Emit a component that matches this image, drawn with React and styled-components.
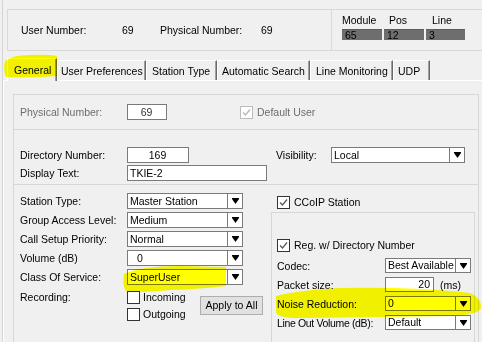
import React from 'react';
import styled, { createGlobalStyle } from 'styled-components';

const Global = createGlobalStyle`
  html, body { margin: 0; padding: 0; background: #f0f0f0; }
  body { font-family: "Liberation Sans", Arial, sans-serif; font-size: 10.5px; color: #000; }
  * { box-sizing: border-box; }
`;

const Screen = styled.div`
  position: relative;
  width: 482px;
  height: 342px;
  overflow: hidden;
  background: #f0f0f0;
  padding-left: 2px;
`;

const Frame = styled.div`
  height: 100%;
  border-left: 1px solid #d5d5d5;
  display: flex;
  flex-direction: column;
`;

const Header = styled.div`
  margin: 9px 0 0 4px;
  height: 42px;
  border: 1px solid #d9d9d9;
  border-right: none;
  display: flex;
  flex-shrink: 0;
`;

const HeaderLeft = styled.div`
  width: 324px;
  border-right: 1px solid #d9d9d9;
  display: flex;
  align-items: center;
  padding-left: 13px;
  line-height: 14px;
`;

const HeaderField = styled.span`
  width: ${p => p.$w}px;
  white-space: nowrap;
`;

const HeaderRight = styled.div`
  padding: 4px 0 0 10px;
  display: grid;
  grid-template-columns: 40px 40px 39px;
  column-gap: 2px;
  grid-template-rows: 12px 11px;
  row-gap: 3px;
  align-content: start;
`;

const ColLabel = styled.span`
  padding-left: ${p => p.$pad}px;
  line-height: 12px;
  white-space: nowrap;
`;

const ReadBox = styled.div`
  height: 11px;
  background: #6e6e6e;
  border-top: 1px solid #5c5c5c;
  line-height: 10px;
  padding-left: 3px;
  color: #000;
`;

const TabStrip = styled.div`
  margin: 7px 0 0 4px;
  height: 22px;
  display: flex;
  align-items: flex-end;
  flex-shrink: 0;
  position: relative;
  z-index: 1;
`;

const Tab = styled.div`
  width: ${p => p.$w}px;
  height: ${p => (p.$active ? 23 : 20)}px;
  margin-bottom: ${p => (p.$active ? -1 : 0)}px;
  background: #f0f0f0;
  border-top: 1px solid #fff;
  border-left: 1px solid #fff;
  border-right: 1px solid #696969;
  box-shadow: inset -1px 0 0 #a0a0a0;
  padding-left: ${p => p.$pad}px;
  padding-top: ${p => (p.$active ? 4 : 3)}px;
  line-height: 14px;
  white-space: nowrap;
`;

const TabPage = styled.div`
  flex: 1;
  border-top: 1px solid #fff;
  border-left: 1px solid #fff;
  padding: 13px 0 0 9px;
`;

const Groups = styled.div`
  width: 466px;
  border: 1px solid #d7d7d7;
  border-bottom: none;
`;

const Section = styled.div`
  height: ${p => p.$h}px;
  border-bottom: 1px solid #d7d7d7;
  padding-left: 6px;
`;

const PhysRow = styled.div`
  height: 100%;
  display: flex;
  align-items: center;
`;

const Label = styled.span`
  width: ${p => (p.$w ? `${p.$w}px` : 'auto')};
  flex-shrink: 0;
  line-height: 14px;
  white-space: nowrap;
  color: ${p => (p.$disabled ? '#6d6d6d' : '#000')};
  letter-spacing: ${p => (p.$tight ? '-0.35px' : 'normal')};
`;

const Field = styled.div`
  width: ${p => p.$w}px;
  height: ${p => p.$h || 16}px;
  flex-shrink: 0;
  background: #fff;
  border: 1px solid #7a7a7a;
  text-align: ${p => p.$align || 'left'};
  padding: 0 ${p => (p.$align === 'right' ? 3 : 1)}px 0 ${p => (p.$align === 'center' ? 0 : 2)}px;
  line-height: ${p => (p.$h || 16) - 2}px;
  white-space: nowrap;
  overflow: hidden;
  color: ${p => (p.$dim ? '#333' : '#000')};
`;

const CheckRow = styled.div`
  display: flex;
  align-items: center;
  gap: ${p => p.$gap || 4}px;
  height: ${p => p.$h || 12}px;
  margin-left: ${p => p.$ml || 0}px;
  line-height: 14px;
  white-space: nowrap;
  color: ${p => (p.$disabled ? '#6d6d6d' : '#000')};
`;

const Box = styled.span`
  width: 13px;
  height: 13px;
  flex-shrink: 0;
  background: #fff;
  border: 1px solid ${p => (p.$disabled ? '#bcbcbc' : '#333')};
  display: flex;
  align-items: center;
  justify-content: center;
`;

const DirGrid = styled.div`
  display: grid;
  grid-template-columns: 107px 149px 55px 134px;
  grid-template-rows: 16px 16px;
  row-gap: 2px;
  padding-top: 17px;
  align-items: center;
`;

const Lower = styled.div`
  display: flex;
  height: 200px;
`;

const LeftCol = styled.div`
  width: 257px;
  padding: 8px 0 0 6px;
`;

const FormGrid = styled.div`
  display: grid;
  grid-template-columns: ${p => p.$cols};
  grid-auto-rows: ${p => p.$row}px;
  row-gap: ${p => p.$gap}px;
  align-items: center;
  margin-top: ${p => p.$mt || 0}px;
`;

const RecordRow = styled.div`
  display: flex;
  align-items: center;
  margin-top: 5px;
`;

const RecLabel = styled.span`
  width: 107px;
  align-self: flex-start;
  line-height: 14px;
`;

const CheckList = styled.div`
  width: 73px;
  display: flex;
  flex-direction: column;
  gap: 3px;
`;

const Button = styled.div`
  width: 63px;
  height: 19px;
  background: #e1e1e1;
  border: 1px solid #adadad;
  line-height: 17px;
  text-align: center;
  white-space: nowrap;
`;

const RightCol = styled.div`
  flex: 1;
  padding-top: 11px;
  display: flex;
  flex-direction: column;
`;

const InnerGroup = styled.div`
  width: 204px;
  flex: 1;
  margin-top: 4px;
  border: 1px solid #d7d7d7;
  border-bottom: none;
  padding: 26px 0 0 5px;
`;

const Inline = styled.div`
  display: flex;
  align-items: center;
  gap: 6px;
`;

const SelBox = styled.div`
  width: ${p => p.$w}px;
  height: ${p => p.$h || 16}px;
  background: #fff;
  border: 1px solid #7a7a7a;
  display: flex;
`;

const SelText = styled.span`
  flex: 1;
  padding-left: ${p => 2 + (p.$indent || 0)}px;
  line-height: ${p => p.$lh}px;
  white-space: nowrap;
  overflow: hidden;
`;

const SelArrow = styled.span`
  width: 15px;
  border-left: 1px solid #7a7a7a;
  display: flex;
  align-items: center;
  justify-content: center;
`;

const Marker = styled.svg`
  position: absolute;
  left: 0;
  top: 0;
  pointer-events: none;
  mix-blend-mode: multiply;
  z-index: 2;
`;

function Check({ checked, disabled }) {
  return (
    <Box $disabled={disabled}>
      {checked && (
        <svg width="11" height="11" viewBox="0 0 11 11">
          <path d="M2 5.5 L4.5 8 L9 2.5" fill="none" stroke={disabled ? '#b8b8b8' : '#5a5a5a'} strokeWidth="1.3" />
        </svg>
      )}
    </Box>
  );
}

function Select({ value, w, h = 16, indent }) {
  return (
    <SelBox $w={w} $h={h}>
      <SelText $indent={indent} $lh={h - 2}>{value}</SelText>
      <SelArrow>
        <svg width="7" height="6" viewBox="0 0 7 6">
          <rect x="0" y="0" width="7" height="1" fill="#000" />
          <polygon points="0,1 7,1 3.5,6" fill="#000" />
        </svg>
      </SelArrow>
    </SelBox>
  );
}

const tabs = [
  { t: 'General', w: 50, pad: 6, active: true },
  { t: 'User Preferences', w: 89, pad: 3 },
  { t: 'Station Type', w: 71, pad: 5 },
  { t: 'Automatic Search', w: 93, pad: 4 },
  { t: 'Line Monitoring', w: 83, pad: 5 },
  { t: 'UDP', w: 37, pad: 4 },
];

const leftRows = [
  ['Station Type:', 'Master Station'],
  ['Group Access Level:', 'Medium'],
  ['Call Setup Priority:', 'Normal'],
  ['Volume (dB)', '0', 7],
  ['Class Of Service:', 'SuperUser'],
];

export default function App() {
  return (
    <Screen>
      <Global />
      <Frame>
        <Header>
          <HeaderLeft>
            <HeaderField $w={101}>User Number:</HeaderField>
            <HeaderField $w={38}>69</HeaderField>
            <HeaderField $w={101}>Physical Number:</HeaderField>
            <HeaderField $w={30}>69</HeaderField>
          </HeaderLeft>
          <HeaderRight>
            <ColLabel $pad={0}>Module</ColLabel>
            <ColLabel $pad={5}>Pos</ColLabel>
            <ColLabel $pad={6}>Line</ColLabel>
            <ReadBox>65</ReadBox>
            <ReadBox>12</ReadBox>
            <ReadBox>3</ReadBox>
          </HeaderRight>
        </Header>

        <TabStrip>
          {tabs.map(tb => (
            <Tab key={tb.t} $w={tb.w} $pad={tb.pad} $active={tb.active}>{tb.t}</Tab>
          ))}
        </TabStrip>

        <TabPage>
          <Groups>
            <Section $h={35}>
              <PhysRow>
                <Label $w={107} $disabled>Physical Number:</Label>
                <Field $w={40} $align="center" $dim>69</Field>
                <CheckRow $ml={73} $disabled>
                  <Check checked disabled />
                  Default User
                </CheckRow>
              </PhysRow>
            </Section>

            <Section $h={55}>
              <DirGrid>
                <Label>Directory Number:</Label>
                <Field $w={62} $align="center">169</Field>
                <Label>Visibility:</Label>
                <Select value="Local" w={134} />
                <Label>Display Text:</Label>
                <Field $w={140}>TKIE-2</Field>
              </DirGrid>
            </Section>

            <Lower>
              <LeftCol>
                <FormGrid $cols="107px 116px" $row={16} $gap={3}>
                  {leftRows.map(([l, v, ind]) => (
                    <React.Fragment key={l}>
                      <Label>{l}</Label>
                      <Select value={v} w={116} indent={ind} />
                    </React.Fragment>
                  ))}
                </FormGrid>
                <RecordRow>
                  <RecLabel>Recording:</RecLabel>
                  <CheckList>
                    <CheckRow $h={14} $gap={3}><Check />Incoming</CheckRow>
                    <CheckRow $h={14} $gap={3}><Check />Outgoing</CheckRow>
                  </CheckList>
                  <Button>Apply to All</Button>
                </RecordRow>
              </LeftCol>

              <RightCol>
                <CheckRow $ml={6}><Check checked />CCoIP Station</CheckRow>
                <InnerGroup>
                  <CheckRow><Check checked />Reg. w/ Directory Number</CheckRow>
                  <FormGrid $cols="108px 86px" $row={15} $gap={4} $mt={7}>
                    <Label>Codec:</Label>
                    <Select value="Best Available" w={86} h={15} />
                    <Label>Packet size:</Label>
                    <Inline>
                      <Field $w={49} $h={15} $align="right">20</Field>
                      <Label>(ms)</Label>
                    </Inline>
                    <Label>Noise Reduction:</Label>
                    <Select value="0" w={86} h={15} />
                    <Label $tight>Line Out Volume (dB):</Label>
                    <Select value="Default" w={86} h={15} />
                  </FormGrid>
                </InnerGroup>
              </RightCol>
            </Lower>
          </Groups>
        </TabPage>
      </Frame>

      <Marker width="482" height="342" viewBox="0 0 482 342">
        <path d="M5,61 Q12,55 30,55 Q48,54 57,56 L57,76 Q32,78 6,77 Q3,70 5,61 Z" fill="#ffff00" />
        <path d="M124,274 Q140,266 180,266 L226,267 L226,286 Q200,289 170,290 Q140,293 126,291 Q122,285 124,274 Z" fill="#ffff00" />
        <path d="M276,296 Q300,290 340,288 Q420,287 470,293 Q482,298 481,308 Q478,315 450,316 L300,318 Q277,318 276,312 Z" fill="#ffff00" />
      </Marker>
    </Screen>
  );
}
